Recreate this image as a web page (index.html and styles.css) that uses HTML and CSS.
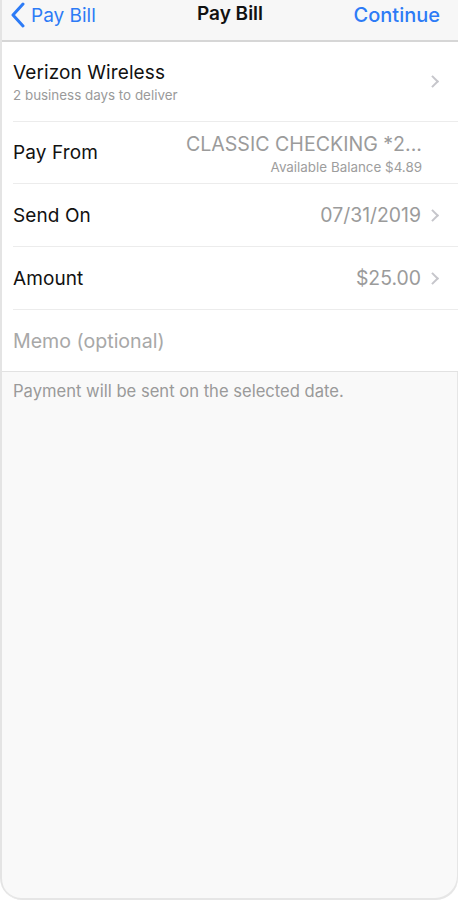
FILE: index.html
```html
<!DOCTYPE html>
<html lang="en">
<head>
    <meta charset="UTF-8">
    <meta name="viewport" content="width=device-width, initial-scale=1.0">
    <title>Pay Bill</title>
    <link rel="stylesheet" href="styles.css">
</head>
<body>
    <div class="screen">
        <nav class="navbar">
            <a class="nav-back" href="#">
                <svg width="16" height="26" viewBox="0 0 16 26"><path d="M13 2 L3 13 L13 24" fill="none" stroke="currentColor" stroke-width="3" stroke-linecap="round" stroke-linejoin="round"/></svg>
                <span>Pay Bill</span>
            </a>
            <div class="nav-title">Pay Bill</div>
            <a class="nav-action" href="#">Continue</a>
        </nav>

        <ul class="form-list">
            <li class="row row-payee">
                <div class="row-main">
                    <div class="row-label">Verizon Wireless</div>
                    <div class="row-sub">2 business days to deliver</div>
                </div>
                <span class="chevron"></span>
            </li>
            <li class="row row-account">
                <div class="row-label">Pay From</div>
                <div class="row-value account">
                    <div class="account-name">CLASSIC CHECKING *2...</div>
                    <div class="account-balance">Available Balance $4.89</div>
                </div>
                <span class="chevron-space"></span>
            </li>
            <li class="row">
                <div class="row-label">Send On</div>
                <div class="row-value">07/31/2019</div>
                <span class="chevron"></span>
            </li>
            <li class="row">
                <div class="row-label">Amount</div>
                <div class="row-value">$25.00</div>
                <span class="chevron"></span>
            </li>
            <li class="row row-memo">
                <input class="memo" type="text" placeholder="Memo (optional)">
            </li>
        </ul>

        <p class="footnote">Payment will be sent on the selected date.</p>
    </div>
</body>
</html>
```

FILE: styles.css
```css
html, body {
    margin: 0;
    padding: 0;
    height: 100%;
}
body {
    font-family: 'Inter', 'Roboto', sans-serif;
    background-color: #ffffff;
    color: #111;
}
.screen {
    box-sizing: border-box;
    height: 900px;
    background-color: #f9f9f9;
    border-left: 2px solid #e4e4e4;
    border-bottom-left-radius: 22px;
    border-bottom-right-radius: 22px;
    box-shadow: inset -1px -2px 0 #e6e6e6;
    overflow: hidden;
}
.navbar {
    height: 40px;
    background-color: #f7f7f7;
    border-bottom: 2px solid #d6d6d6;
    display: flex;
    align-items: center;
    justify-content: space-between;
    padding: 0 18px 0 8px;
    position: relative;
}
.navbar a {
    color: #2d7bf6;
    text-decoration: none;
}
.nav-back {
    display: flex;
    align-items: center;
    gap: 5px;
    font-size: 19px;
    margin-top: -10px;
}
.nav-title {
    font-size: 19px;
    font-weight: 600;
    color: #111;
    position: absolute;
    left: 0;
    right: 0;
    text-align: center;
    top: 2px;
    pointer-events: none;
}
.nav-action {
    font-size: 20px;
    font-weight: 500;
    margin-top: -10px;
}
.form-list {
    list-style: none;
    margin: 0;
    padding: 0 0 0 11px;
    background-color: #fff;
    border-bottom: 1px solid #e2e2e2;
}
.row {
    display: flex;
    align-items: center;
    height: 62px;
    border-bottom: 1px solid #ececec;
    padding-right: 18px;
}
.row:last-child {
    border-bottom: none;
    height: 61px;
}
.row-payee {
    height: 79px;
}
.row-account {
    height: 61px;
}
.row-main {
    flex: 1;
}
.row-label {
    font-size: 19px;
    color: #111;
    flex: 1;
    letter-spacing: 0.1px;
}
.row-sub {
    font-size: 13.4px;
    color: #9a9a9a;
    margin-top: 3px;
}
.row-value {
    font-size: 19.4px;
    color: #9b9b9b;
    text-align: right;
}
.account {
    margin-top: 4px;
}
.account-name {
    font-size: 19.6px;
    line-height: 1.1;
}
.account-balance {
    font-size: 13.4px;
    color: #9d9d9d;
    margin-top: 4px;
}
.chevron,
.chevron-space {
    width: 8px;
    margin-left: 10px;
    flex-shrink: 0;
}
.chevron {
    height: 9px;
    width: 9px;
    border-top: 2px solid #c6c6cb;
    border-right: 2px solid #c6c6cb;
    transform: rotate(45deg) translate(-2px, 2px);
    box-sizing: border-box;
    margin-right: 0;
}
.memo {
    border: none;
    outline: none;
    font-family: inherit;
    font-size: 19.6px;
    width: 100%;
    padding: 0;
    background: transparent;
}
.memo::placeholder {
    color: #a8a8a8;
}
.footnote {
    margin: 0;
    padding: 9px 11px;
    font-size: 16.6px;
    color: #9a9a9a;
}
```
